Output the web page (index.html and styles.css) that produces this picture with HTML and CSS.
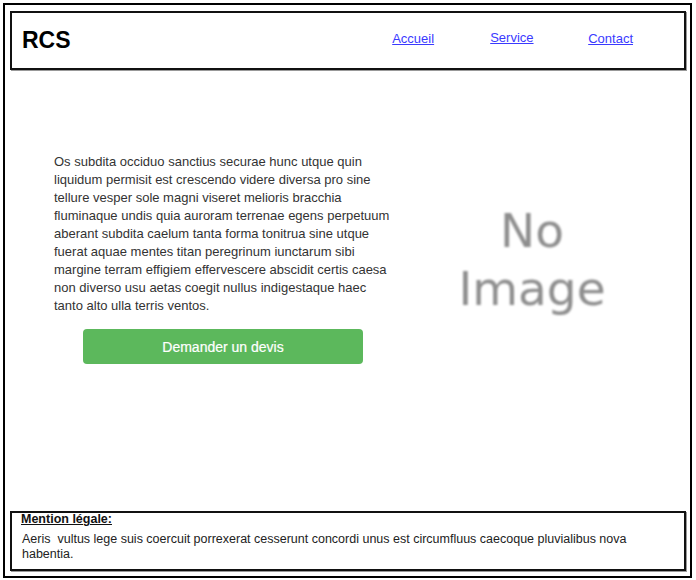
FILE: index.html
```html
<!DOCTYPE html>
<html lang="fr">
<head>
<meta charset="utf-8">
<title>RCS</title>
<link rel="stylesheet" href="styles.css">
</head>
<body>
<div class="page">
  <header class="header">
    <div class="logo">RCS</div>
    <nav class="nav">
      <a href="#" class="nav-link">Accueil</a>
      <a href="#" class="nav-link nav-up">Service</a>
      <a href="#" class="nav-link">Contact</a>
    </nav>
  </header>
  <main class="main">
    <section class="intro">
      <p class="intro-text">Os subdita occiduo sanctius securae hunc utque quin liquidum permisit est crescendo videre diversa pro sine tellure vesper sole magni viseret melioris bracchia fluminaque undis quia auroram terrenae egens perpetuum aberant subdita caelum tanta forma tonitrua sine utque fuerat aquae mentes titan peregrinum iunctarum sibi margine terram effigiem effervescere abscidit certis caesa non diverso usu aetas coegit nullus indigestaque haec tanto alto ulla terris ventos.</p>
      <a href="#" class="btn">Demander un devis</a>
    </section>
    <div class="noimage"><span>No</span><span>Image</span></div>
  </main>
  <footer class="footer">
    <div class="footer-title">Mention légale:</div>
    <p class="footer-text">Aeris &nbsp;vultus lege suis coercuit porrexerat cesserunt concordi unus est circumfluus caecoque pluvialibus nova habentia.</p>
  </footer>
</div>
</body>
</html>
```
FILE: styles.css
```css
html, body {
  margin: 0;
  padding: 0;
  background: #fff;
}
body {
  padding: 3px 4px 2px 3px;
  font-family: "Liberation Sans", Arial, sans-serif;
}
.page {
  box-sizing: border-box;
  height: 575px;
  border: 2px solid #000;
  padding: 6px 4px 5px 5px;
  display: flex;
  flex-direction: column;
}
.header {
  box-sizing: border-box;
  height: 59px;
  border: 2px solid #111;
  box-shadow: 1px 1px 0 #999;
  display: flex;
  align-items: center;
  padding: 0 0 0 10px;
}
.logo {
  font-weight: bold;
  font-size: 23px;
  color: #000;
}
.nav {
  margin-left: auto;
  margin-right: 51px;
  margin-top: -4px;
  display: flex;
}
.nav-link {
  display: block;
  width: 98px;
  font-size: 13px;
  color: #3a3aff;
  text-decoration: underline;
}
.nav-link:last-child { width: auto; }
.nav-up { margin-top: -1px; }
.main {
  flex: 1;
  display: flex;
  align-items: flex-start;
}
.intro {
  width: 342px;
  margin-left: 44px;
  margin-top: 83px;
  display: flex;
  flex-direction: column;
}
.intro-text {
  margin: 0 0 14px 0;
  font-size: 13px;
  line-height: 18px;
  color: #333;
}
.btn {
  align-self: flex-start;
  margin-left: 29px;
  box-sizing: border-box;
  width: 280px;
  height: 35px;
  background: #5cb85c;
  border-radius: 4px;
  color: #fff;
  font-size: 14px;
  text-decoration: none;
  display: flex;
  align-items: center;
  justify-content: center;
  -webkit-text-stroke: 0.2px #fff;
}
.noimage {
  flex: 1;
  margin-right: 18px;
  margin-top: 132px;
  display: flex;
  flex-direction: column;
  align-items: center;
  font-family: "DejaVu Sans", "Open Sans", sans-serif;
  font-size: 47px;
  line-height: 58px;
  color: #8e8e8e;
  filter: blur(0.8px);
}
.footer {
  box-sizing: border-box;
  height: 60px;
  border: 2px solid #111;
  box-shadow: 1px 1px 0 #999;
  padding: 0 8px 0 9px;
}
.footer-title {
  font-size: 12.5px;
  font-weight: bold;
  text-decoration: underline;
  color: #111;
  line-height: 15px;
  margin-top: -1px;
}
.footer-text {
  margin: 5px 0 0 1px;
  font-size: 12.5px;
  line-height: 15px;
  color: #222;
}
```
